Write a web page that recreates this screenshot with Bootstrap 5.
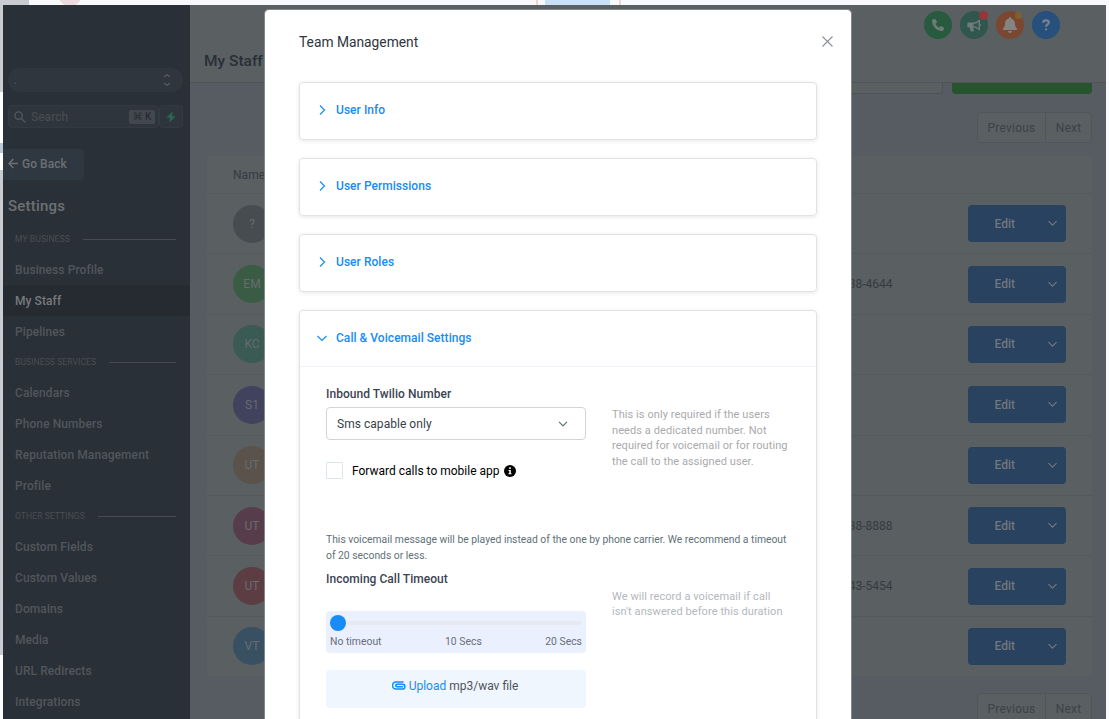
<!DOCTYPE html>
<html lang="en">
<head>
    <meta charset="UTF-8">
    <meta name="viewport" content="width=device-width, initial-scale=1.0">
    <title>Team Management</title>
    <link href="https://cdn.jsdelivr.net/npm/bootstrap@5.3.3/dist/css/bootstrap.min.css" rel="stylesheet">
    <style>
        body {
            font-family: Roboto, "Liberation Sans", sans-serif;
            font-size: 12px;
            line-height: 16px;
            letter-spacing: 0.04px;
            height: 719px;
            overflow: hidden;
            background-color: #f8f9fc;
        }
        svg { display: block; flex-shrink: 0; }

        /* Strips around the app window */
        .top-strip { height: 5px; overflow: hidden; }
        .top-strip .corner { width: 29px; background: #c9ccd2; }
        .top-strip .blob { width: 24px; height: 24px; margin: -18px 0 0 29px; border-radius: 50%; background: #ecdadd; }
        .top-strip .tick { width: 2px; background: #f5d3d0; }
        .top-strip .block { width: 65px; margin: 0 9px 0 7px; background: #c9e1f8; }
        .top-strip .rest { width: 488px; }
        .left-strip { width: 3px; background: #fff; }
        .left-strip .s1 { height: 87px; background: #c9ccd0; }
        .left-strip .s2 { height: 10px; margin: 51px 0 17px; background: #b9c9d6; }
        .left-strip .s3 { height: 485px; background: #c9ccd0; }
        .right-strip { width: 3px; }

        .app { height: 714px; }

        /* Sidebar */
        .sidebar { width: 187px; background: #2a3037; color: #555b62; overflow: hidden; }
        .account { margin: 63px 7px 0 5px; height: 24px; border-radius: 12px; background: #30363d; padding: 0 11px 0 6px; }
        .search-row { margin: 13px 7px 0 5px; height: 23px; }
        .search-box { width: 151px; border: 1px solid #343a42; border-radius: 4px; background: #2f353c; padding: 0 3px 0 5px; color: #484e55; gap: 5px; }
        .search-box kbd { font: 500 10px/14px Roboto, "DejaVu Sans", sans-serif; letter-spacing: 0; background: #43474f; color: #272c33; border-radius: 2px; padding: 0; width: 26px; white-space: nowrap; text-align: center; }
        .bolt { width: 24px; border: 1px solid #343a42; border-radius: 4px; background: #2f353c; }
        .go-back { margin-top: 21px; width: 81px; height: 31px; background: #2f3741; border-radius: 0 4px 4px 0; color: #6c7074; padding: 0 0 2px 5px; gap: 4px; font-weight: 500; }
        .side-title { font-size: 15px; font-weight: 500; color: #6c7074; line-height: 20px; margin: 16px 0 0 5px; height: 28px; letter-spacing: 0.2px; }
        .side-label { height: 30px; font-size: 8.7px; letter-spacing: 0; color: #484d54; padding: 0 14px 0 12px; gap: 13px; }
        .side-label::after { content: ""; flex: 1; height: 1px; background: #464b52; }
        .side-link { height: 31px; padding-left: 12px; font-weight: 500; letter-spacing: 0.08px; display: flex; align-items: center; color: #50565d; }
        .side-link.current { background: #262a31; color: #777a7d; border-radius: 0 3px 3px 0; }

        /* Dimmed page */
        .page { background: #565c61; color: #353b41; min-width: 0; }
        .page-head { height: 78px; background: #5a5f62; border-bottom: 1px solid #4f5559; padding: 6px 46px 0 14px; }
        .page-head h1 { font-size: 15.5px; font-weight: 500; color: #292f37; margin: 40px 0 0; line-height: 20px; letter-spacing: 0; }
        .round-btn { width: 28px; height: 28px; border-radius: 50%; position: relative; }
        .round-btn .dot { position: absolute; width: 9px; height: 9px; border-radius: 50%; top: 0; right: 0; }
        .round-btn .dot-small { width: 7px; height: 7px; top: 1px; right: 2px; }
        .btn-call { background: #285a40; }
        .btn-news { background: #30574e; }
        .btn-bell { background: #7b4730; }
        .btn-help { background: #28507c; }
        .page-body { padding: 0 14px 0 17px; }
        .filter-row { height: 11px; gap: 9px; margin-bottom: 18px; }
        .filter-input { width: 260px; background: #5a5f62; border: 1px solid #4d5357; border-top: 0; border-radius: 0 0 4px 4px; }
        .add-btn { width: 140px; background: #28532f; border-radius: 0 0 4px 4px; }
        .pager { width: 115px; height: 31px; border: 1px solid #50565b; border-radius: 4px; background: #5a5f62; color: #3c4248; letter-spacing: 0.2px; }
        .pager span { display: flex; align-items: center; justify-content: center; flex: 1; }
        .pager span:first-child { flex: 0 0 68px; border-right: 1px solid #50565b; }
        .staff { background: #5a5f62; margin: 13px 0 17px; border-radius: 4px; }
        .staff-head { height: 37px; padding-left: 26px; }
        .staff-row { height: 60.4px; border-top: 1px solid #53595d; padding: 0 26px; }
        .avatar { width: 38px; height: 38px; border-radius: 50%; color: #676c6f; }
        .phone { margin-left: auto; margin-right: 75px; white-space: nowrap; letter-spacing: 0; }
        .edit-btn { width: 98.500px; height: 37px; border-radius: 4px; background: #28425f; color: #71777c; font-weight: 500; padding: 0 8px 0 27px; }

        /* Dialog over the page */
        .dialog { position: absolute; left: 264px; top: 9px; width: 588px; height: 710px; overflow: hidden; background: #fff; border: 1px solid #82878a; border-bottom: 0; border-radius: 5px 5px 0 0; padding: 0 34px; }
        .dialog-head { height: 72px; padding: 0 0 9px; font-size: 13.8px; letter-spacing: 0; color: #2f363d; }
        .dialog-head svg { margin-right: -16px; }
        .panel { border: 1px solid #e0e3e6; border-radius: 4px; box-shadow: 0 1px 4px rgba(0, 0, 0, 0.1); margin-bottom: 18px; }
        .panel-head { height: 56px; padding: 0 0 2px 16px; gap: 8px; font-weight: 500; color: #188bf6; }
        .panel-open .panel-head { border-bottom: 1px solid #edf3f8; padding-bottom: 1px; }
        .panel-main { height: 420px; padding: 19px 26px; color: #2a3135; }
        .field-title { font-weight: 500; color: #3b4453; }
        .pick { height: 33px; border: 1px solid #d0d5dc; border-radius: 4px; padding: 0 17px 0 10px; color: #39414e; }
        .row-number { height: 146px; }
        .left-col { width: 260px; flex-shrink: 0; }
        .hint { color: #a9aaac; font-size: 11px; line-height: 15.6px; letter-spacing: 0.08px; white-space: nowrap; margin: 21px 0 0 26px; }
        .hint-light { color: #b3b8bc; margin-top: 25.5px; }
        .forward { margin-top: 22px; letter-spacing: 0; }
        .tick-box { width: 17px; height: 17px; border: 1px solid #dbe5ee; border-radius: 1px; margin-right: 9px; }
        .notice { font-size: 10.350px; line-height: 15.5px; color: #607179; letter-spacing: 0; white-space: nowrap; }
        .slider { height: 42px; background: #ebf0fe; border-radius: 4px; padding: 4px 4px 0; font-size: 10.4px; letter-spacing: 0; color: #666f7d; margin-top: 24px; }
        .slider .rail { height: 4px; flex: 1; background: #e6e9ef; border-radius: 2px; }
        .slider .knob { width: 16px; height: 16px; border-radius: 50%; background: #188bf6; }
        .slider .scale { padding-top: 3px; }
        .upload { height: 38px; margin-top: 17px; background: #eff6fe; border-radius: 4px; padding: 0 2px 7px 0; color: #505459; gap: 3px; letter-spacing: 0; }
        .upload b { font-weight: 400; color: #188bf6; }
    </style>
</head>
<body>

    <div class="top-strip d-flex">
        <div class="corner"></div>
        <div class="blob"></div>
        <div class="tick ms-auto"></div>
        <div class="block"></div>
        <div class="tick"></div>
        <div class="rest"></div>
    </div>

    <div class="app d-flex">
        <div class="left-strip">
            <div class="s1"></div>
            <div class="s2"></div>
            <div class="s3"></div>
        </div>

        <nav class="sidebar flex-shrink-0">
            <div class="account d-flex align-items-center justify-content-between">
                <span>.</span>
                <svg width="10" height="14" viewBox="0 0 10 14" fill="none" stroke="#555b61" stroke-width="1.3"><path d="M2 4 5 1.500 8 4M2 10l3 2.500L8 10"/></svg>
            </div>
            <div class="search-row d-flex">
                <div class="search-box d-flex align-items-center">
                    <svg width="12" height="12" viewBox="0 0 12 12" fill="none" stroke="#50565c" stroke-width="1.4"><circle cx="4.600" cy="4.600" r="3.700"/><path d="m7.400 7.400 4 4"/></svg>
                    <span>Search</span>
                    <kbd class="ms-auto">⌘ K</kbd>
                </div>
                <div class="bolt d-flex align-items-center justify-content-center">
                    <svg width="10" height="12" viewBox="0 0 10 12" fill="#2a6650"><path d="M6.500.5.300 6.800h3.500L3.500 11.500l6.200-6.300H6.200z"/></svg>
                </div>
            </div>
            <div class="go-back d-flex align-items-center">
                <svg width="10" height="11" viewBox="0 0 10 11" fill="none" stroke="#6c7074" stroke-width="1.600"><path d="M10 5.500H1M5.300 1 1 5.500 5.300 10"/></svg>
                Go Back
            </div>
            <div class="side-title">Settings</div>
            <div class="side-label d-flex align-items-center">MY BUSINESS</div>
            <div class="side-link">Business Profile</div>
            <div class="side-link current">My Staff</div>
            <div class="side-link">Pipelines</div>
            <div class="side-label d-flex align-items-center">BUSINESS SERVICES</div>
            <div class="side-link">Calendars</div>
            <div class="side-link">Phone Numbers</div>
            <div class="side-link">Reputation Management</div>
            <div class="side-link">Profile</div>
            <div class="side-label d-flex align-items-center">OTHER SETTINGS</div>
            <div class="side-link">Custom Fields</div>
            <div class="side-link">Custom Values</div>
            <div class="side-link">Domains</div>
            <div class="side-link">Media</div>
            <div class="side-link">URL Redirects</div>
            <div class="side-link">Integrations</div>
        </nav>

        <main class="page flex-grow-1 overflow-hidden">
            <header class="page-head d-flex justify-content-between align-items-start">
                <h1>My Staff</h1>
                <div class="d-flex gap-2">
                    <div class="round-btn btn-call d-flex align-items-center justify-content-center">
                        <svg width="12" height="12" viewBox="0 0 512 512" fill="#6f7b78"><path d="M164.900 24.600c-7.700-18.600-28-28.500-47.400-23.200l-88 24C12.100 30.200 0 46 0 64c0 247.400 200.600 448 448 448 18 0 33.800-12.100 38.600-29.500l24-88c5.300-19.400-4.600-39.700-23.200-47.400l-96-40c-16.300-6.800-35.200-2.100-46.300 11.600L304.700 368C234.300 334.700 177.300 277.700 144 207.300L193.300 167c13.700-11.200 18.400-30 11.600-46.300z"/></svg>
                    </div>
                    <div class="round-btn btn-news d-flex align-items-center justify-content-center">
                        <svg width="14" height="13" viewBox="0 0 14 13" fill="#6f7b78"><path fill-rule="evenodd" d="M12.300.5c.4 0 .7.300.7.700v3.500c1.300.4 1.300 2.200 0 2.600v3.500c0 .6-.7.900-1.100.5C10.200 9.700 8.500 8.700 6 8.600l.8 3.200c.1.400-.1.700-.5.700H4.200a.7.700 0 0 1-.6-.5L2.800 8.600H1.700C.9 8.600.3 8 .3 7.200V5c0-.8.600-1.400 1.400-1.400h3.600C8.200 3.600 10 2.400 11.900.7zM11.600 2.900C10 4.100 8.300 4.800 6.600 5v2.200c1.800.1 3.500.8 5 2z"/></svg>
                        <span class="dot" style="background: #96363a"></span>
                    </div>
                    <div class="round-btn btn-bell d-flex align-items-center justify-content-center">
                        <svg width="14" height="16" viewBox="0 0 448 512" fill="#858482"><path d="M224 0c-17.700 0-32 14.300-32 32v19.200C119 66 64 130.600 64 208v18.800c0 47-17.300 92.400-48.500 127.600l-7.400 8.300c-8.400 9.400-10.400 22.900-5.300 34.400S19.400 416 32 416h384c12.600 0 24-7.400 29.200-18.900s3.100-25-5.300-34.400l-7.400-8.300C401.300 319.200 384 273.900 384 226.800V208c0-77.400-55-142-128-156.800V32c0-17.700-14.300-32-32-32zm64 448H160c0 36 28 64 64 64s64-28 64-64z"/></svg>
                        <span class="dot dot-small" style="background: #7e602e"></span>
                    </div>
                    <div class="round-btn btn-help d-flex align-items-center justify-content-center">
                        <svg width="8" height="12" viewBox="0 0 9 13" fill="none" stroke="#7c8690" stroke-width="2.300"><path d="M1.300 4C1.400 2.200 2.700 1.300 4.500 1.300S7.700 2.300 7.700 3.800c0 2.200-3.200 2-3.200 4.700M4.500 10.300v2.200"/></svg>
                    </div>
                </div>
            </header>

            <div class="page-body">
                <div class="filter-row d-flex justify-content-end">
                    <div class="filter-input"></div>
                    <div class="add-btn"></div>
                </div>
                <div class="pager d-flex ms-auto">
                    <span>Previous</span><span>Next</span>
                </div>

                <div class="staff">
                    <div class="staff-head d-flex align-items-center">Name</div>
                    <div id="staff-rows"></div>
                </div>

                <div class="pager d-flex ms-auto">
                    <span>Previous</span><span>Next</span>
                </div>
            </div>
        </main>
        <div class="right-strip flex-shrink-0"></div>
    </div>

    <section class="dialog">
        <div class="dialog-head d-flex align-items-center justify-content-between">
            <span>Team Management</span>
            <svg width="11" height="11" viewBox="0 0 11 11" stroke="#8a9096" stroke-width="1.100"><path d="m.5.5 10 10M10.500.5l-10 10"/></svg>
        </div>

        <div class="panel">
            <div class="panel-head d-flex align-items-center">
                <svg width="12" height="12" viewBox="0 0 12 12" fill="none" stroke="#188bf6" stroke-width="1.200"><path d="m4 1.500 4.500 4.500L4 10.500"/></svg>
                User Info
            </div>
        </div>
        <div class="panel">
            <div class="panel-head d-flex align-items-center">
                <svg width="12" height="12" viewBox="0 0 12 12" fill="none" stroke="#188bf6" stroke-width="1.200"><path d="m4 1.500 4.500 4.500L4 10.500"/></svg>
                User Permissions
            </div>
        </div>
        <div class="panel">
            <div class="panel-head d-flex align-items-center">
                <svg width="12" height="12" viewBox="0 0 12 12" fill="none" stroke="#188bf6" stroke-width="1.200"><path d="m4 1.500 4.500 4.500L4 10.500"/></svg>
                User Roles
            </div>
        </div>

        <div class="panel panel-open">
            <div class="panel-head d-flex align-items-center">
                <svg width="12" height="12" viewBox="0 0 12 12" fill="none" stroke="#188bf6" stroke-width="1.200"><path d="M1.500 4 6 8.500 10.500 4"/></svg>
                Call &amp; Voicemail Settings
            </div>
            <div class="panel-main">
                <div class="row-number d-flex">
                    <div class="left-col">
                        <div class="field-title" style="height: 21px">Inbound Twilio Number</div>
                        <div class="pick d-flex align-items-center justify-content-between">
                            Sms capable only
                            <svg width="10" height="6" viewBox="0 0 10 6" fill="none" stroke="#607179" stroke-width="1.200"><path d="m1 .8 4 4 4-4"/></svg>
                        </div>
                        <div class="forward d-flex align-items-center text-black">
                            <span class="tick-box"></span>
                            <span>Forward calls to mobile app</span>
                            <svg class="ms-1" width="12" height="12" viewBox="0 0 12 12"><circle cx="6" cy="6" r="6"/><path fill="#fff" d="M4.500 5h2.300v3.200h.7v1h-3v-1h.8V6h-.8zM5.200 2.300h1.600v1.600H5.200z"/></svg>
                        </div>
                    </div>
                    <div class="hint">This is only required if the users<br>needs a dedicated number. Not<br>required for voicemail or for routing<br>the call to the assigned user.</div>
                </div>

                <div class="notice">This voicemail message will be played instead of the one by phone carrier. We recommend a timeout<br>of 20 seconds or less.</div>

                <div class="d-flex">
                    <div class="left-col">
                        <div class="field-title mt-2">Incoming Call Timeout</div>
                        <div class="slider">
                            <div class="d-flex align-items-center">
                                <span class="knob"></span>
                                <span class="rail"></span>
                            </div>
                            <div class="scale d-flex justify-content-between">
                                <span>No timeout</span><span>10 Secs</span><span>20 Secs</span>
                            </div>
                        </div>
                        <div class="upload d-flex align-items-center justify-content-center">
                            <svg width="14" height="9" viewBox="0 0 14 9" fill="none" stroke="#188bf6" stroke-width="1.600"><path d="M11 5.700H5a1.200 1.200 0 0 1 0-2.400h5.500a2.300 2.300 0 0 1 0 4.700H4A3.500 3.500 0 0 1 4 1h7.500"/></svg>
                            <span><b>Upload</b> mp3/wav file</span>
                        </div>
                    </div>
                    <div class="hint hint-light">We will record a voicemail if call<br>isn't answered before this duration</div>
                </div>
            </div>
        </div>
    </section>

    <script src="https://cdn.jsdelivr.net/npm/bootstrap@5.3.3/dist/js/bootstrap.bundle.min.js"></script>
    <script>
        // Staff list
        const staff = [
            { initials: '?', color: '#464c50', phone: '' },
            { initials: 'EM', color: '#3b5c44', phone: '38-4644' },
            { initials: 'KC', color: '#3a5a54', phone: '' },
            { initials: 'S1', color: '#40425e', phone: '' },
            { initials: 'UT', color: '#5b524b', phone: '' },
            { initials: 'UT', color: '#573d4b', phone: '38-8888' },
            { initials: 'UT', color: '#5b3d43', phone: '43-5454' },
            { initials: 'VT', color: '#395063', phone: '' }
        ];

        document.getElementById('staff-rows').innerHTML = staff.map(s => `
            <div class="staff-row d-flex align-items-center">
                <div class="avatar d-flex align-items-center justify-content-center" style="background: ${s.color}">${s.initials}</div>
                <div class="phone">${s.phone}</div>
                <div class="edit-btn d-flex align-items-center justify-content-between">
                    Edit
                    <svg width="11" height="7" viewBox="0 0 11 7" fill="none" stroke="#71777c" stroke-width="1.2"><path d="m1.500 1.200 4 4 4-4"/></svg>
                </div>
            </div>`).join('');
    </script>

</body>
</html>
